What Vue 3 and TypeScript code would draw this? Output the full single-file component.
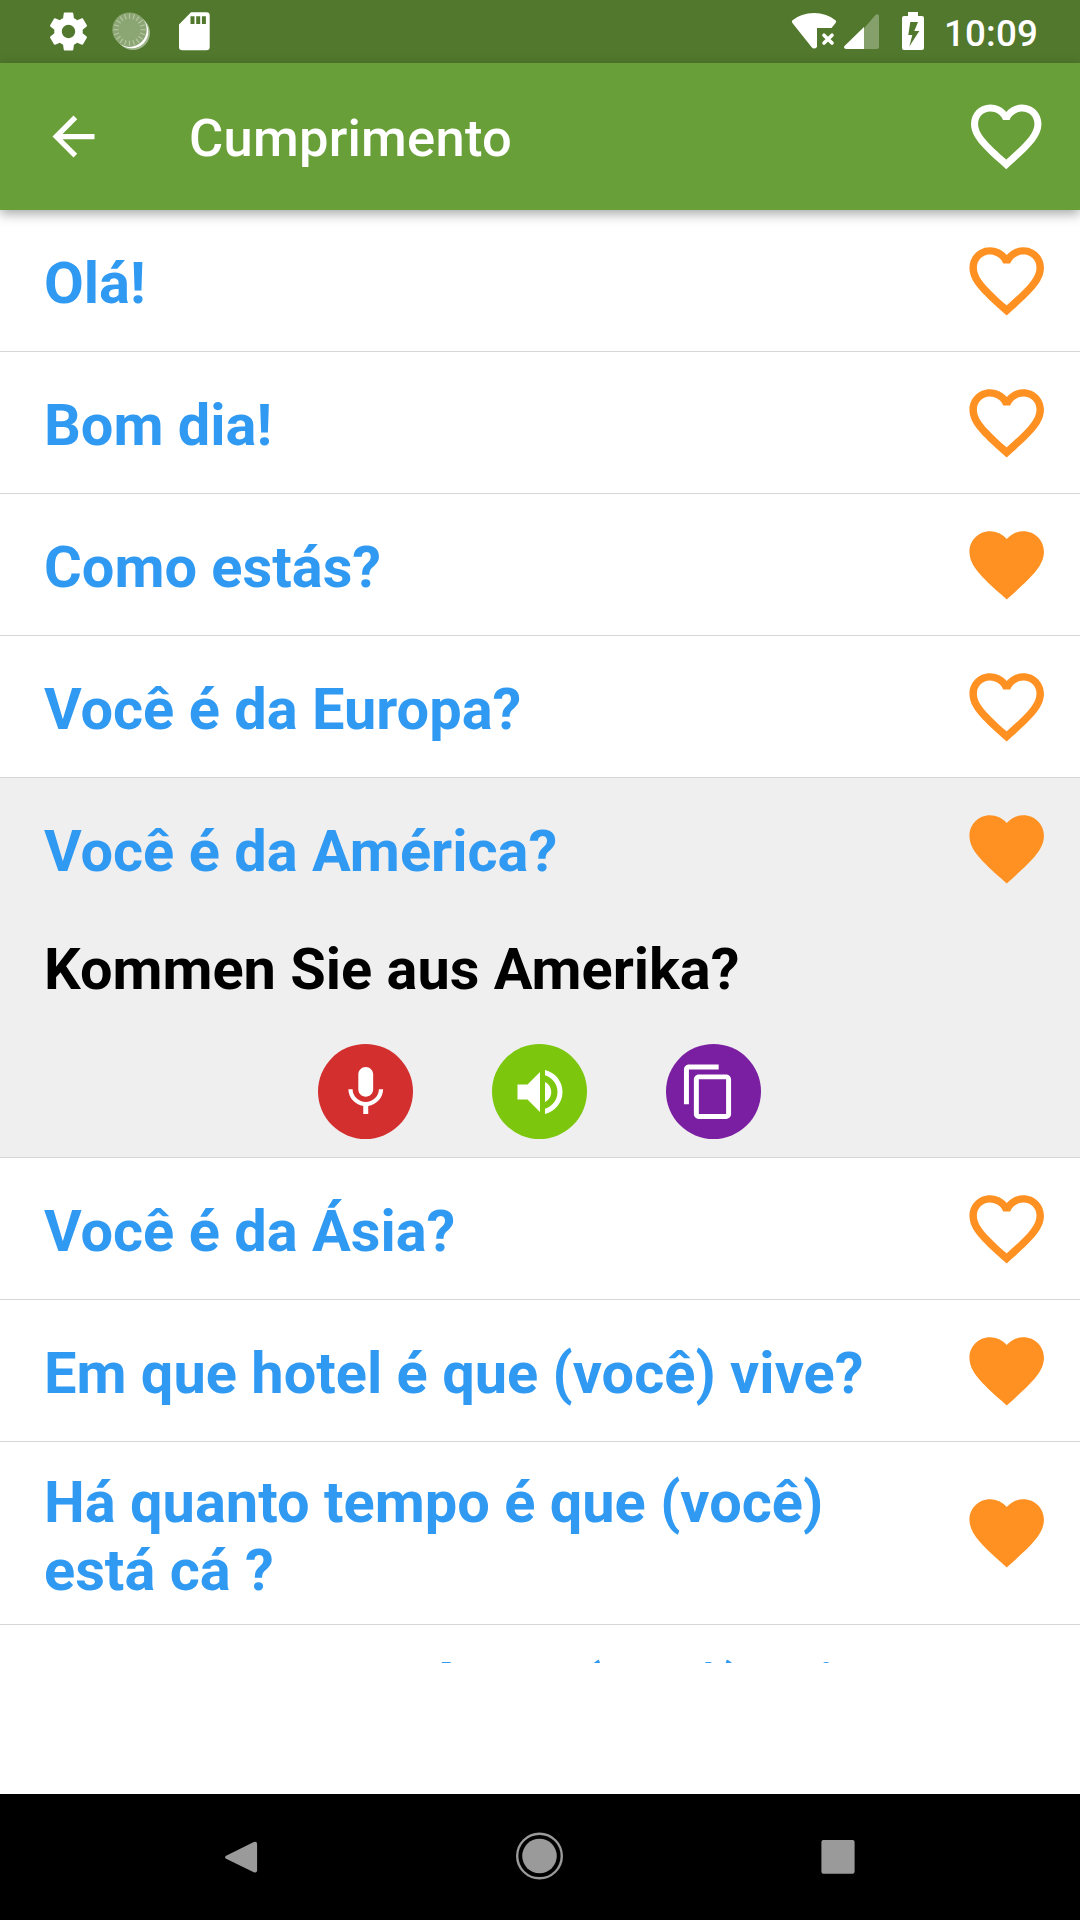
<script setup lang="ts">
import { ref } from 'vue'

interface Phrase {
  id: number
  text: string
  favorite: boolean
  translation?: string
}

const heartFull =
  'M12 21.35l-1.45-1.32C5.4 15.36 2 12.28 2 8.5 2 5.42 4.42 3 7.5 3c1.74 0 3.41.81 4.5 2.09C13.09 3.81 14.76 3 16.5 3 19.58 3 22 5.42 22 8.5c0 3.78-3.4 6.86-8.55 11.54L12 21.35z'
const heartOutline =
  'M16.5 3c-1.74 0-3.41.81-4.5 2.09C10.91 3.81 9.24 3 7.5 3 4.42 3 2 5.42 2 8.5c0 3.78 3.4 6.86 8.55 11.54L12 21.35l1.45-1.32C18.6 15.36 22 12.28 22 8.5 22 5.42 19.58 3 16.5 3zm-4.4 15.55l-.1.1-.1-.1C7.14 14.24 4 11.39 4 8.5 4 6.5 5.5 5 7.5 5c1.54 0 3.04.99 3.57 2.36h1.87C13.46 5.99 14.96 5 16.5 5c2 0 3.5 1.5 3.5 3.5 0 2.89-3.14 5.74-7.9 10.05z'

const phrases = ref<Phrase[]>([
  { id: 1, text: 'Olá!', favorite: false },
  { id: 2, text: 'Bom dia!', favorite: false },
  { id: 3, text: 'Como estás?', favorite: true },
  { id: 4, text: 'Você é da Europa?', favorite: false },
  { id: 5, text: 'Você é da América?', favorite: true, translation: 'Kommen Sie aus Amerika?' },
  { id: 6, text: 'Você é da Ásia?', favorite: false },
  { id: 7, text: 'Em que hotel é que (você) vive?', favorite: true },
  { id: 8, text: 'Há quanto tempo é que (você) está cá ?', favorite: true },
  { id: 9, text: 'Quanto tempo é que (você) vai ficar cá?', favorite: false },
])
const openId = ref(5)

const ticks = Array.from({ length: 20 }, (_, i) => i * 18)
</script>

<template>
  <div class="screen">
    <div class="status">
      <svg class="status-left" width="220" height="63" viewBox="0 0 220 63">
        <g transform="translate(45.7 8.7) scale(1.9)" fill="#fff">
          <path d="M19.43 12.98c.04-.32.07-.64.07-.98s-.03-.66-.07-.98l2.11-1.65c.19-.15.24-.42.12-.64l-2-3.46c-.12-.22-.39-.3-.61-.22l-2.49 1c-.52-.4-1.08-.73-1.69-.98l-.38-2.65C14.46 2.18 14.25 2 14 2h-4c-.25 0-.46.18-.49.42l-.38 2.65c-.61.25-1.17.59-1.69.98l-2.49-1c-.23-.09-.49 0-.61.22l-2 3.46c-.13.22-.07.49.12.64l2.11 1.65c-.04.32-.07.65-.07.98s.03.66.07.98l-2.11 1.65c-.19.15-.24.42-.12.64l2 3.46c.12.22.39.3.61.22l2.49-1c.52.4 1.08.73 1.69.98l.38 2.65c.03.24.24.42.49.42h4c.25 0 .46-.18.49-.42l.38-2.65c.61-.25 1.17-.59 1.69-.98l2.49 1c.23.09.49 0 .61-.22l2-3.46c.12-.22.07-.49-.12-.64l-2.11-1.65zM12 15.5c-1.93 0-3.5-1.57-3.5-3.5s1.57-3.5 3.5-3.5 3.5 1.57 3.5 3.5-1.57 3.5-3.5 3.5z" />
        </g>
        <circle cx="133" cy="33" r="17" fill="#fff" fill-opacity=".45" />
        <circle cx="131.5" cy="31.5" r="16.8" fill="#fff" />
        <circle cx="129.5" cy="29.7" r="17.2" fill="#8ca673" />
        <g stroke="#b6c7a5" stroke-width="1.1">
          <line v-for="a in ticks" :key="a" x1="129.5" y1="13.5" x2="129.5" y2="18.7" :transform="`rotate(${a} 129.5 29.7)`" />
        </g>
        <path fill="#fff" fill-rule="evenodd" d="M191 12.3h15.5q3.2 0 3.2 3.2v31.6q0 3.2-3.2 3.2h-24.300q-3.200 0-3.200-3.200v-22.500zM190.500 16.300v7.700h4v-7.700zM196.200 16.300v7.700h4v-7.700zM201.900 16.300v7.700h4v-7.700z" />
      </svg>
      <svg class="status-right" width="150" height="63" viewBox="785 0 150 63">
        <path fill="#fff" d="M792.200 20.500Q801 13 814 13T835.800 20.500Q836.600 21.800 835.600 23L831.500 28H817V47Q814 50 811.500 47L792.400 23Q791.400 21.700 792.200 20.500z" />
        <path fill="none" stroke="#fff" stroke-width="3.600" stroke-linecap="round" d="M824 35.200l8 7.800M832 35.200l-8 7.800" />
        <path fill="#fff" fill-opacity=".3" d="M864 28.300l11.700-13.500q3.300-1.500 3.300 1.700V46.500q0 2.500-2.500 2.500H864z" />
        <path fill="#fff" d="M864 27V49H846q-3-.6-1.500-3z" />
        <path fill="#fff" fill-rule="evenodd" d="M908 12h10v4h4q2 0 2 2v30q0 2-2 2h-18q-2 0-2-2V18q0-2 2-2h4zM910.300 22L908.300 35h4l-3 11.500L919.300 31h-5L918 22z" />
      </svg>
      <span class="clock">10:09</span>
    </div>
    <header class="bar">
      <svg class="back" width="63" height="63" viewBox="0 0 24 24">
        <path d="M20 11H7.83l5.590-5.590L12 4l-8 8 8 8 1.410-1.410L7.830 13H20v-2z" />
      </svg>
      <h1 class="title">Cumprimento</h1>
      <svg class="bar-heart" width="84.500" height="84.500" viewBox="0 0 24 24"><path :d="heartOutline" /></svg>
    </header>
    <main class="list">
      <section v-for="p in phrases" :key="p.id" class="item" :class="{ open: p.id === openId }">
        <div class="row">
          <span class="phrase">{{ p.text }}</span>
          <svg class="heart" width="89.400" height="89.400" viewBox="0 0 24 24">
            <path :d="p.favorite ? heartFull : heartOutline" />
          </svg>
        </div>
        <template v-if="p.id === openId">
          <p class="translation">{{ p.translation }}</p>
          <div class="actions">
            <button class="action mic">
              <svg width="59.500" height="59.500" viewBox="0 0 24 24"><path d="M12 14c1.660 0 2.990-1.340 2.990-3L15 5c0-1.660-1.340-3-3-3S9 3.340 9 5v6c0 1.660 1.340 3 3 3zm5.300-3c0 3-2.540 5.100-5.300 5.100S6.700 14 6.700 11H5c0 3.410 2.720 6.230 6 6.720V21h2v-3.280c3.280-.48 6-3.300 6-6.720h-1.700z" /></svg>
            </button>
            <button class="action sound">
              <svg width="60" height="60" viewBox="0 0 24 24"><path d="M3 9v6h4l5 5V4L7 9H3zm13.500 3c0-1.770-1.020-3.290-2.500-4.030v8.050c1.480-.73 2.500-2.250 2.500-4.020zM14 3.230v2.060c2.890.86 5 3.540 5 6.710s-2.110 5.850-5 6.710v2.060c4.010-.91 7-4.490 7-8.770s-2.990-7.860-7-8.770z" /></svg>
            </button>
            <button class="action copy">
              <svg width="59.500" height="59.500" viewBox="0 0 24 24"><path d="M16 1H4c-1.100 0-2 .9-2 2v14h2V3h12V1zm3 4H8c-1.100 0-2 .9-2 2v14c0 1.100.9 2 2 2h11c1.100 0 2-.9 2-2V7c0-1.100-.9-2-2-2zm0 16H8V7h11v14z" /></svg>
            </button>
          </div>
        </template>
      </section>
    </main>
    <div class="spacer"></div>
    <nav class="nav">
      <svg width="48" height="48" viewBox="0 0 48 48"><path d="M9.800 22.500L37.500 6.700Q40.800 5.500 40.800 9V39Q40.800 42.500 37.500 41.300L9.800 26Q7.500 24.300 9.800 22.500z" transform="translate(-.7 4.200) scale(1 .87)" /></svg>
      <svg width="48" height="48" viewBox="0 0 48 48"><circle cx="23.500" cy="24" r="22.300" fill="none" stroke="#9a9a9a" stroke-width="2.400" /><circle cx="23.500" cy="24" r="17.300" /></svg>
      <svg width="48" height="48" viewBox="0 0 48 48"><rect x="7.400" y="8" width="33.200" height="33.800" rx="2" /></svg>
    </nav>
  </div>
</template>

<style>
body {
  margin: 0;
  overflow: hidden;
}
</style>

<style scoped>
.screen {
  width: 1080px;
  height: 1920px;
  display: flex;
  flex-direction: column;
  background: #fff;
  font-family: Roboto, 'Liberation Sans', sans-serif;
  overflow: hidden;
}
svg {
  display: block;
  flex: none;
}
.status {
  flex: none;
  height: 63px;
  display: flex;
  background: #51782c;
}
.status-right {
  margin-left: auto;
}
.clock {
  width: 93px;
  margin: 0 43px 0 9px;
  color: #fff;
  font-size: 36.75px;
  font-weight: 500;
  line-height: 67px;
  letter-spacing: 0.15px;
  white-space: nowrap;
}
.bar {
  flex: none;
  height: 147px;
  box-sizing: border-box;
  padding: 0 31.500px 0 42px;
  display: flex;
  align-items: center;
  background: #689f38;
  box-shadow: 0 4px 11px rgba(0, 0, 0, 0.34);
  position: relative;
  z-index: 1;
}
.bar svg {
  fill: #fff;
}
.title {
  flex: 1;
  margin: 3px 0 0 84px;
  color: #fff;
  font-size: 52.500px;
  font-weight: 500;
  line-height: 62px;
  letter-spacing: 0.24px;
}
.list {
  flex: none;
  height: 1453px;
  overflow: hidden;
}
.item {
  border-bottom: 1px solid #d6d6d6;
}
.item.open {
  background: #efefef;
}
.row {
  min-height: 141px;
  box-sizing: border-box;
  padding: 20px 29px 20px 44px;
  display: flex;
  align-items: center;
  justify-content: space-between;
}
.phrase {
  max-width: 860px;
  padding: 5.500px 0 0.500px;
  color: #3099f2;
  font-size: 57.750px;
  font-weight: 700;
  line-height: 68px;
}
.heart {
  fill: #ff9122;
}
.translation {
  margin: 16px 44px 0;
  color: #000;
  font-size: 57.700px;
  font-weight: 700;
  line-height: 68px;
}
.actions {
  margin: 41px 0 18px;
  padding-right: 1px;
  display: flex;
  justify-content: center;
  gap: 79px;
}
.action {
  width: 95px;
  height: 95px;
  padding: 0;
  border: 0;
  border-radius: 50%;
  display: flex;
  align-items: center;
  justify-content: center;
}
.action svg {
  fill: #fff;
}
.mic {
  background: #d32f2f;
}
.sound {
  background: #7cc70d;
}
.copy {
  padding-right: 10px;
  background: #7b1fa2;
}
.spacer {
  flex: 1;
}
.nav {
  flex: none;
  height: 126px;
  box-sizing: border-box;
  padding: 0 218px 2px 217px;
  display: flex;
  align-items: center;
  justify-content: space-between;
  background: #000;
}
.nav svg {
  fill: #9a9a9a;
}
</style>
